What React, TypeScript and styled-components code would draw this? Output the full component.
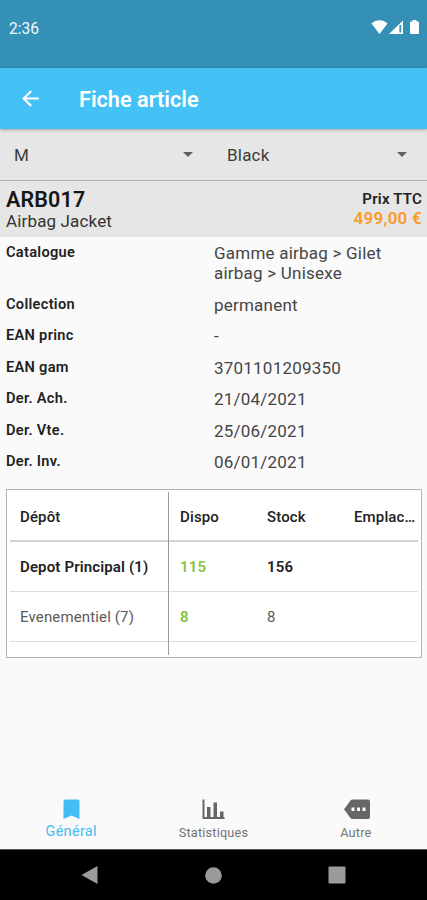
import React from "react";
import styled, { createGlobalStyle } from "styled-components";

const Global = createGlobalStyle`
  * { box-sizing: border-box; }
  body { margin: 0; background: #fafafa; font-family: Roboto, "Liberation Sans", sans-serif; }
`;

const Screen = styled.div`
  width: 427px;
  height: 900px;
  display: flex;
  flex-direction: column;
  overflow: hidden;
  background: #fafafa;
  color: #222;
`;

const StatusBar = styled.div`
  height: 68px;
  flex: none;
  padding: 19px 7px 0 9px;
  display: flex;
  justify-content: space-between;
  align-items: flex-start;
  background: #3590b6;
  color: #f2fafd;
  font-size: 15.6px;
  line-height: 20px;
`;

const StatusIcons = styled.svg`
  display: block;
`;

const AppBar = styled.header`
  height: 61px;
  flex: none;
  padding-left: 18px;
  display: flex;
  align-items: center;
  gap: 36px;
  background: #44c1f5;
  color: #fff;
  z-index: 1;
  box-shadow: 0 1px 3px rgba(0, 0, 0, 0.3);
`;

const AppTitle = styled.h1`
  margin: 2px 0 0;
  font-size: 21.7px;
  font-weight: 600;
  line-height: 28px;
`;

const Filters = styled.div`
  height: 52px;
  flex: none;
  display: grid;
  grid-template-columns: 213px 214px;
  background: #e6e6e6;
  border-bottom: 1px solid #b0b0b0;
`;

const Select = styled.div`
  padding: 0 20px 0 14px;
  display: flex;
  align-items: center;
  justify-content: space-between;
  font-size: 17px;
  letter-spacing: 0.2px;
  color: #3c3c3c;
`;

const Caret = styled.span`
  border: 5px solid transparent;
  border-top-color: #606060;
  border-bottom: 0;
`;

const Summary = styled.section`
  height: 56px;
  flex: none;
  padding: 6px 5px 0 6px;
  display: flex;
  justify-content: space-between;
  background: #e6e6e6;
`;

const Stack = styled.div<{ $end?: boolean }>`
  display: flex;
  flex-direction: column;
  align-items: ${(p) => (p.$end ? "flex-end" : "flex-start")};
`;

const Reference = styled.span`
  font-size: 21.5px;
  font-weight: 600;
  line-height: 25px;
  letter-spacing: 0.15px;
  color: #161616;
`;

const ArticleName = styled.span`
  font-size: 17px;
  line-height: 18px;
  letter-spacing: 0.15px;
  color: #333;
`;

const PriceLabel = styled.span`
  font-size: 15px;
  font-weight: 600;
  line-height: 24px;
  letter-spacing: 0.2px;
`;

const Price = styled.span`
  font-size: 17px;
  font-weight: 600;
  line-height: 14px;
  letter-spacing: 0.25px;
  color: #fa9a2b;
`;

const Details = styled.dl`
  margin: 0;
  padding: 6px 6px 0;
  flex: none;
  display: flex;
  flex-direction: column;
  gap: 11.5px;
`;

const Detail = styled.div`
  display: grid;
  grid-template-columns: 208px 190px;
`;

const Label = styled.dt`
  font-size: 14.6px;
  font-weight: 600;
  line-height: 18px;
  letter-spacing: 0.3px;
`;

const Value = styled.dd`
  margin: 0;
  font-size: 17px;
  line-height: 20px;
  letter-spacing: 0.22px;
  color: #454545;
`;

const DepotTable = styled.div`
  margin: 17px 5px 0 6px;
  height: 169px;
  flex: none;
  padding: 2px 3px;
  display: grid;
  grid-template-columns: 159px minmax(0, 1fr);
  background: #fff;
  border: 1px solid #b4b4b6;
`;

const FrozenPane = styled.div`
  border-right: 1px solid #989ca2;
`;

const Pane = styled.div`
  overflow: hidden;
`;

const Row = styled.div<{ $head?: boolean; $strong?: boolean }>`
  height: 50px;
  padding-top: ${(p) => (p.$head ? 2 : 1)}px;
  display: flex;
  align-items: center;
  border-bottom: ${(p) => (p.$head ? "2px solid #d0d4d8" : "1px solid #d9dee2")};
  font-size: 15px;
  font-weight: ${(p) => (p.$strong ? 600 : p.$head ? 500 : 400)};
  color: ${(p) => (p.$strong || p.$head ? "#222" : "#5a5a5a")};
`;

const Cell = styled.span<{ $green?: boolean; $fixed?: boolean }>`
  width: ${(p) => (p.$fixed ? 157 : 87)}px;
  flex: none;
  padding-left: ${(p) => (p.$fixed ? 10 : 11)}px;
  letter-spacing: 0.14px;
  white-space: nowrap;
  ${(p) => p.$green && "color: #84c440; font-weight: 600;"}
`;

const Tabs = styled.nav`
  height: 62px;
  flex: none;
  margin-top: auto;
  display: grid;
  grid-template-columns: repeat(3, 1fr);
  background: #fafafa;
  box-shadow: 0 -1px 2px rgba(0, 0, 0, 0.025);
`;

const Tab = styled.div<{ $active?: boolean }>`
  padding-top: 9px;
  display: flex;
  flex-direction: column;
  align-items: center;
  font-size: ${(p) => (p.$active ? 14.5 : 12.7)}px;
  line-height: ${(p) => (p.$active ? 20 : 22)}px;
  letter-spacing: ${(p) => (p.$active ? 0.3 : 0.2)}px;
  color: ${(p) => (p.$active ? "#44bdf2" : "#747474")};
`;

const TabIcon = styled.svg`
  display: block;
  height: 26px;
  width: 28px;
`;

const SystemNav = styled.div`
  height: 51px;
  flex: none;
  padding: 0 81px 0 80px;
  display: flex;
  justify-content: space-between;
  align-items: center;
  background: #000;
  border-top: 1px solid #555;
`;

const details = [
  ["Catalogue", "Gamme airbag > Gilet airbag > Unisexe"],
  ["Collection", "permanent"],
  ["EAN princ", "-"],
  ["EAN gam", "3701101209350"],
  ["Der. Ach.", "21/04/2021"],
  ["Der. Vte.", "25/06/2021"],
  ["Der. Inv.", "06/01/2021"],
];

const depots = [
  { name: "Depot Principal (1)", dispo: 115, stock: 156, main: true },
  { name: "Evenementiel (7)", dispo: 8, stock: 8, main: false },
];

export default function App() {
  return (
    <Screen>
      <Global />
      <StatusBar>
        <span>2:36</span>
        <StatusIcons width="50" height="16" viewBox="0 0 50 16" fill="#fff">
          <path d="M1.500 4.500C6 0 13 0 17.500 4.500L9.500 15Z" />
          <path d="M33 1.500V15H19Z" />
          <path d="M30.300 6V13.500" stroke="#3590b6" strokeWidth="1.800" />
          <path d="M40 3.500q0-1 1-1h1.500V1h4v1.500H48q1 0 1 1V14q0 1-1 1h-7q-1 0-1-1Z" />
        </StatusIcons>
      </StatusBar>
      <AppBar>
        <svg width="25" height="25" viewBox="0 0 24 24" fill="#fff">
          <path d="M20 11H7.830l5.590-5.590L12 4l-8 8 8 8 1.410-1.410L7.830 13H20z" />
        </svg>
        <AppTitle>Fiche article</AppTitle>
      </AppBar>
      <Filters>
        <Select>M<Caret /></Select>
        <Select>Black<Caret /></Select>
      </Filters>
      <Summary>
        <Stack>
          <Reference>ARB017</Reference>
          <ArticleName>Airbag Jacket</ArticleName>
        </Stack>
        <Stack $end>
          <PriceLabel>Prix TTC</PriceLabel>
          <Price>499,00 €</Price>
        </Stack>
      </Summary>
      <Details>
        {details.map(([label, value]) => (
          <Detail key={label}>
            <Label>{label}</Label>
            <Value>{value}</Value>
          </Detail>
        ))}
      </Details>
      <DepotTable>
        <FrozenPane>
          <Row $head><Cell $fixed>Dépôt</Cell></Row>
          {depots.map((d) => (
            <Row key={d.name} $strong={d.main}><Cell $fixed>{d.name}</Cell></Row>
          ))}
        </FrozenPane>
        <Pane>
          <Row $head><Cell>Dispo</Cell><Cell>Stock</Cell><Cell>Emplac…</Cell></Row>
          {depots.map((d) => (
            <Row key={d.name} $strong={d.main}>
              <Cell $green>{d.dispo}</Cell>
              <Cell>{d.stock}</Cell>
            </Row>
          ))}
        </Pane>
      </DepotTable>
      <Tabs>
        <Tab $active>
          <TabIcon viewBox="0 0 28 26" fill="#44bdf2">
            <path d="M6.500 5.500q0-2 2-2h12q2 0 2 2V23l-8-3.500L6.500 23Z" />
          </TabIcon>
          Général
        </Tab>
        <Tab>
          <TabIcon viewBox="0 0 28 26" fill="#666">
            <path d="M3.500 3.500h2v17.500h20v2h-22ZM8 11h3.500v10H8ZM14.500 6.500H18v14.500h-3.500ZM21 15.500h3.500v5.500H21Z" />
          </TabIcon>
          Statistiques
        </Tab>
        <Tab>
          <TabIcon viewBox="0 0 28 26" fill="#666">
            <path d="M8.500 4.500q.8-1 2-1H26q2 0 2 2v15.500q0 2-2 2H10.500q-1.200 0-2-1L2 13.200Z" />
            <path fill="#fff" d="M9.500 11.500h3V15h-3ZM15 11.500h3V15h-3ZM20.500 11.500h3V15h-3Z" />
          </TabIcon>
          Autre
        </Tab>
      </Tabs>
      <SystemNav>
        <svg width="18" height="20" viewBox="0 0 18 20"><path d="M17.500 1v18L1.500 10Z" fill="#9b9b9b" /></svg>
        <svg width="17" height="17" viewBox="0 0 17 17"><circle cx="8.500" cy="8.500" r="8.300" fill="#9b9b9b" /></svg>
        <svg width="18" height="18" viewBox="0 0 18 18"><rect x=".5" y=".5" width="17" height="17" rx="1" fill="#9b9b9b" /></svg>
      </SystemNav>
    </Screen>
  );
}
